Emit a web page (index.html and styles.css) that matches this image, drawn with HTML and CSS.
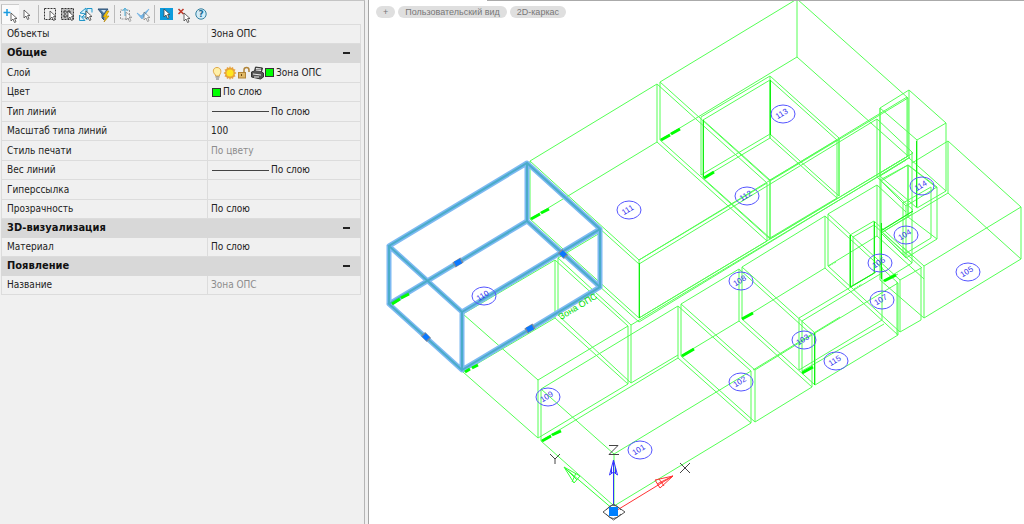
FILE: index.html
```html
<!DOCTYPE html>
<html lang="ru">
<head>
    <meta charset="UTF-8">
    <meta name="viewport" content="width=device-width, initial-scale=1.0">
    <title>Свойства</title>
    <link rel="stylesheet" href="styles.css">
</head>
<body>
    <!-- Properties panel -->
    <aside class="panel">
        <div class="toolbar">
            <button class="tool active" aria-label="Добавить к выбору"><svg viewBox="0 0 18 20"><path d="M5 4v7M1.500 7.500h7" stroke="#1a9be0" stroke-width="1.500"/><use href="#cursor" x="9" y="8"/></svg></button>
            <button class="tool" aria-label="Выбор"><svg viewBox="0 0 18 20"><use href="#cursor" x="5" y="6"/></svg></button>
            <span class="sep"></span>
            <button class="tool" aria-label="Выбор рамкой"><svg viewBox="0 0 18 20"><rect x="3.500" y="4.500" width="11" height="11" class="dash"/><use href="#cursor" x="9" y="7"/></svg></button>
            <button class="tool" aria-label="Выбрать все"><svg viewBox="0 0 18 20"><rect x="2.500" y="4.500" width="12" height="11" fill="#bbb" class="dash"/><path d="M4 8h9M4 12h9M6 6v9M10 6v9" class="dash"/><use href="#cursor" x="9" y="7"/></svg></button>
            <button class="tool" aria-label="Выбрать подобные"><svg viewBox="0 0 18 20"><path d="M2.500 11V16.500H8zM3 9l6-5v6zM10 4.500h5v4M8 10l-3 3h6zM10 4.500V16" fill="#d9f0fa" stroke="#2196c9"/><use href="#cursor" x="9" y="7"/></svg></button>
            <button class="tool" aria-label="Быстрый выбор"><svg viewBox="0 0 18 20"><path d="M3 5h10l-4 5v6l-2-2v-4z" fill="#4d78a0" stroke="#2e5277"/><path d="M6 6h5l-2 3z" fill="#cfe2f3"/><path d="M12 7L8 13h3l-2 5 5-6h-3l3-5z" fill="#fc0" stroke="#a87800" stroke-width=".6"/></svg></button>
            <span class="sep"></span>
            <button class="tool" aria-label="Выбор снаружи"><svg viewBox="0 0 18 20"><rect x="3.500" y="6" width="9" height="9" class="dash pale"/><path d="M8 12V5M5.500 7L8 4l2.500 3" stroke="#4db0dc" fill="none"/><g opacity=".5"><use href="#cursor" x="9" y="8"/></g></svg></button>
            <button class="tool" aria-label="Применить"><svg viewBox="0 0 18 20"><path d="M2 9l4 3 8-7-7 10z" fill="#78b6e5" stroke="#78b6e5"/><g opacity=".6"><use href="#cursor" x="9" y="8"/></g></svg></button>
            <span class="sep"></span>
            <button class="tool" aria-label="Режим выбора"><svg viewBox="0 0 18 20"><rect x="3" y="4" width="13" height="12" fill="#0c9bdc"/><use href="#cursor" x="7" y="5"/></svg></button>
            <button class="tool" aria-label="Снять выбор"><svg viewBox="0 0 18 20"><path d="M3.500 5l5 5M8.500 5l-5 5" stroke="#c0392b" stroke-width="1.600"/><use href="#cursor" x="9" y="9"/></svg></button>
            <button class="tool" aria-label="Справка"><svg viewBox="0 0 18 20"><circle cx="8" cy="10" r="5.200" fill="#d4ecf8" stroke="#34809f"/><text x="8" y="13" class="question">?</text></svg></button>
        </div>

        <table class="props">
            <tbody>
                <tr><th scope="row">Объекты</th><td>Зона ОПС</td></tr>
            </tbody>
            <tbody class="general">
                <tr class="group"><th colspan="2"><span>Общие</span><button aria-label="Свернуть"></button></th></tr>
                <tr><th scope="row">Слой</th><td><div class="value">
                    <svg class="layer-icons" width="53" height="14" viewBox="0 0 53 14">
                        <path d="M4.500 9C1 6 2 1.500 6 1.500S11 6 8.500 9v1h-4z" fill="#fff0a8" stroke="#dfa743"/>
                        <path d="M4.500 11h4M5 13h3" stroke="#777"/>
                        <path d="M19 0l1 2 2-1 .5 2 2 .5-1 2 2 1.500-2 1.500 1 2-2 .5-.5 2-2-1-1 2-1-2-2 1-.5-2-2-.5 1-2-2-1.500 2-1.500-1-2 2-.5.5-2 2 1z" fill="#e6a23c"/>
                        <circle cx="19" cy="7" r="3.500" fill="#ffe51f"/>
                        <rect x="27.500" y="6.500" width="7" height="5.500" fill="#dfb766" stroke="#b18438"/>
                        <path d="M33 7V4q0-2.500 2.500-2.500T38 4v2" fill="none" stroke="#b18438" stroke-width="1.500"/>
                        <path d="M30.500 8v2" stroke="#6b4914"/>
                        <path d="M40.500 6l3-1 1-4 7 1-1 4 2 1v4l-3 2-9-2z" fill="#555" stroke="#333"/>
                        <path d="M45 4l5 .5M45 2.500l5 .5M42 8l8 1M43 11h5" stroke="#eee"/>
                    </svg>
                    <span class="swatch"></span>Зона ОПС</div></td></tr>
                <tr><th scope="row">Цвет</th><td><div class="value"><span class="swatch"></span>По слою</div></td></tr>
                <tr><th scope="row">Тип линий</th><td><div class="value"><span class="line"></span>По слою</div></td></tr>
                <tr><th scope="row">Масштаб типа линий</th><td>100</td></tr>
                <tr><th scope="row">Стиль печати</th><td class="muted">По цвету</td></tr>
                <tr><th scope="row">Вес линий</th><td><div class="value"><span class="line"></span>По слою</div></td></tr>
                <tr><th scope="row">Гиперссылка</th><td></td></tr>
                <tr><th scope="row">Прозрачность</th><td>По слою</td></tr>
            </tbody>
            <tbody>
                <tr class="group"><th colspan="2"><span>3D-визуализация</span><button aria-label="Свернуть"></button></th></tr>
                <tr><th scope="row">Материал</th><td>По слою</td></tr>
            </tbody>
            <tbody>
                <tr class="group"><th colspan="2"><span>Появление</span><button aria-label="Свернуть"></button></th></tr>
                <tr><th scope="row">Название</th><td class="muted">Зона ОПС</td></tr>
            </tbody>
        </table>
    </aside>

    <!-- Drawing -->
    <main class="drawing">
        <svg class="model" viewBox="369 0 655 524" preserveAspectRatio="xMinYMin meet">
            <defs>
                <g id="cursor"><path d="M0 0v8l2-2 1.500 3.500 1.500-.7L3.600 5.500H6z" fill="#fff" stroke="#444" stroke-width=".8"/></g>
            </defs>
            <g id="zones"></g>
            <g class="extra">
                <!-- upper block -->
                <path d="M701 175V117L770 76L839 138V196L770 134L701 175M770 76V134M770 80V138"/>
                <path d="M639 260L907 97V157M639 264L877 119V177M639 318L908 156M639 322L910 157M631 325L906 160"/>
                <path d="M527 163L639 264M527 221L639 322M877 119L913 153M877 177L913 210M880 180L906 206M880 108V280"/>
                <!-- stair and small rooms -->
                <path d="M839 138V196M912 152V263M913 153L880 173M880 180L908 165L937 188M908 165V217"/>
                <path d="M948 141L912 163M948 193L903 220M924 266L903 247M924 318L880 280M922 268L880 230M921 268V320L900 332"/>
                <path d="M880 231L913 211M881 233L912 263M883 281L912 263M881 233L912 214M874 273L850 287"/>
                <path d="M931 187V238L903 255V203L931 187M853 237L874 225L906 254M874 221L912 256M853 237V285"/>
                <path d="M828 214L877 185V236L828 266M828 214V266L900 332V280L828 214M877 185L906 212M877 236L924 279M900 280L921 268"/>
                <path d="M799 318V370L882 320M802 321V371L884 324M799 318L876 272M802 321L882 273M882 267V320M897 282V335"/>
                <path d="M881 223V278M850 235V287M883 281L898 274"/>
                <path class="strong" d="M639.500 263V318M703.500 120V177M770.500 80V135M850.500 235V287L874.500 273V222M881.500 223V279M814.500 333V385M916.500 141V207M881 231L913 211"/>
            </g>
            <g class="selected">
                <path d="M462 370L600 287L527 221L389 304ZM462 312L600 229L527 163L389 246ZM462 370V312M600 287V229M527 221V163M389 304V246" class="glow"/>
                <path d="M462 370L600 287L527 221L389 304ZM462 312L600 229L527 163L389 246ZM462 370V312M600 287V229M527 221V163M389 304V246" class="core"/>
                <path d="M454 265L462 260M526 331L534 326M560 251L566 257M423 334L429 340" class="grip-edge"/>
                <path d="M455 264L461 261M527 330L533 327M561 252L565 256M424 335L428 339" class="grip"/>
            </g>
            <g class="tags">
                <path d="M531 219L540 214M541 213L549 209M661 140L670 135M671 134L680 129M704 178L714 172M392 304L400 299M401 298L409 294M465 372L470 369M472 368L478 365M542 441L551 436M552 435L561 431M682 356L694 349M742 319L753 313M802 373L813 367M884 281L896 275"/>
                <path class="faint" d="M829 266L836 262M854 289L862 284M881 175L888 171"/>
                <text transform="translate(561 320) rotate(-31)">Зона ОПС</text>
            </g>
            <g id="rooms"></g>
            <!-- UCS icon -->
            <g class="ucs">
                <path d="M614 510L566 469M564 467L580 476L574 483ZM564 467L577 480M576 473L572 482" stroke="#3f3"/>
                <path d="M614 512L673 476M673 476L655 480L660 488ZM673 476L657 484M659 479L664 486" stroke="#f33"/>
                <path d="M613.500 506V475" stroke="#3aa0a8"/>
                <path d="M613.500 505V460L609.500 475L613.500 472L617.500 475L613.500 460M611.500 468V473M615.500 468V473" stroke="#33f"/>
                <path d="M603 512L613.500 504L625 512L613.500 520ZM606 510Q613 500 621 510M606 514Q613 523 621 514" stroke="#555"/>
                <rect x="609" y="507" width="9" height="9" fill="#0080ff"/>
                <path d="M609 445.500H618L609 454.500H619M550 454L555 459L560 454M555 459V464M680 463L690 473M690 463L680 473" stroke="#444"/>
            </g>
        </svg>
        <div class="view-controls">
            <button>+</button>
            <button>Пользовательский вид</button>
            <button>2D-каркас</button>
        </div>
    </main>

    <script src="script.js"></script>
</body>
</html>
```
FILE: styles.css
```css
* { box-sizing: border-box; }
body { margin: 0; height: 100vh; display: flex; overflow: hidden; background: #f0f0f0; color: #222; font-family: "DejaVu Sans Condensed", "DejaVu Sans", sans-serif; font-size: 10px; }
button { border: 0; padding: 0; background: none; font: inherit; color: inherit; }

.panel { flex: 0 0 365px; padding: 2px 3px 0 1px; border-top: 1px solid #c4c4c4; border-right: 1px solid #b5b5b5; }
.toolbar { display: flex; align-items: center; height: 21px; }
.tool { width: 18px; height: 20px; }
.tool svg { display: block; width: 18px; height: 20px; fill: none; }
.tool.active { background: #fafafa; border-left: 1px solid #bbb; border-top: 1px solid #ccc; }
.sep { width: 1px; height: 18px; margin: 0 2px 0 1px; background: #bbb; }
.dash { stroke: #333; stroke-dasharray: 2 1; }
.pale { stroke: #999; }
.question { font: bold 9px "DejaVu Sans", sans-serif; fill: #1d6e94; text-anchor: middle; }

.props { width: 100%; border-collapse: collapse; table-layout: fixed; }
.props tr { height: 19px; }
.general tr:nth-child(even) { height: 20px; }
.props th, .props td { padding: 0 0 0 3px; border: 1px solid #dcdcdc; text-align: left; font-weight: normal; line-height: 16px; white-space: nowrap; }
.props th { width: 206px; padding-left: 5px; }
.props td.muted { color: #8c8c8c; }
.props .group th { background: #d8d8d8; border-color: #d8d8d8; color: #111; font-size: 11px; font-weight: bold; }
.group button { float: right; width: 7px; height: 2px; margin: 7px 10px 0 0; background: #222; }
.value { display: flex; align-items: center; height: 16px; }
.swatch { width: 9px; height: 9px; margin: 0 2px 0 1px; border: 1px solid #333; background: #0f0; }
.line { width: 57px; height: 1px; margin: 0 2px 0 1px; background: #444; }

.drawing { flex: 1; position: relative; margin-left: 3px; min-width: 0; background: #fff; border-left: 1px solid #a5a5a5; }
.drawing::before { content: ""; position: absolute; top: 0; left: 118px; right: 0; height: 1px; background: #aaa; }
.model { display: block; width: 100%; height: 100%; fill: none; }
.view-controls { position: absolute; top: 6px; left: 7px; display: flex; gap: 3px; }
.view-controls button { height: 12px; padding: 0 7px; border-radius: 6px; background: #dfdfdf; color: #777; font: 9px/12px "Liberation Sans", sans-serif; }

#zones path, .extra path { stroke: #5f5; stroke-width: 1; }
.extra .strong { stroke: #1e1; }
.tags path { stroke: #0f0; stroke-width: 3; }
.tags .faint { stroke: #5f5; stroke-width: 1; stroke-dasharray: 2 1; }
.tags text { fill: #0d0; font: 9px "Liberation Sans", sans-serif; }
.glow { stroke: #7db9f2; stroke-width: 5; stroke-linejoin: round; }
.core { stroke: #4aacc9; stroke-width: 2; }
.grip-edge { stroke: #7c8a9c; stroke-width: 6; }
.grip { stroke: #0a78ff; stroke-width: 5; }
#rooms ellipse { stroke: #55f; }
#rooms text { fill: #33e; font: 8px "Liberation Sans", sans-serif; text-anchor: middle; }
.ucs path { stroke-width: 1; }
```
FILE: script.js
```js
const NS = 'http://www.w3.org/2000/svg';

// floor corners (front, right, back, left) and height of each zone
const zones = [
    [[639, 318], [767, 241], [657, 142], [530, 219], 58],
    [[770, 239], [908, 156], [797, 57], [660, 140], 58],
    [[770, 238], [837, 198], [770, 138], [703, 178], 58],
    [[538, 438], [628, 384], [555, 318], [463, 372], 58],
    [[614, 506], [751, 423], [678, 358], [541, 441], 52],
    [[755, 422], [812, 387], [739, 321], [681, 356], 52],
    [[815, 385], [898, 335], [825, 268], [742, 319], 52],
    [[917, 208], [946, 191], [909, 158], [880, 176], 68],
    [[906, 258], [937, 239], [908, 217], [881, 233], 52]
];

// open parts of the zones that share a wall
const walls = [
    [[558, 258], [631, 325], [631, 383], [558, 315], [558, 258], [600, 233]],
    [[631, 383], [678, 355]],
    [[753, 370], [840, 317]],
    [[948, 141], [1021, 207], [1021, 259], [924, 318], [924, 266], [1021, 207]],
    [[1021, 259], [948, 193], [948, 141]],
    [[850, 287], [850, 235], [874, 221], [874, 273]]
];

const rooms = [
    [110, 484, 296], [111, 629, 210], [113, 783, 114], [112, 747, 196], [114, 922, 186],
    [104, 906, 235], [106, 880, 263], [105, 968, 272], [107, 882, 300], [108, 741, 281],
    [103, 804, 340], [115, 836, 361], [102, 741, 382], [109, 548, 397], [101, 640, 450]
];

function add(parent, name, attrs) {
    const el = document.createElementNS(NS, name);
    for (const key in attrs) el.setAttribute(key, attrs[key]);
    parent.appendChild(el);
    return el;
}

const zoneLayer = document.getElementById('zones');
zones.forEach((zone) => {
    const h = zone[4];
    const floor = zone.slice(0, 4);
    const roof = floor.map(([x, y]) => [x, y - h]);
    const posts = floor.map(([x, y]) => `M${x} ${y}V${y - h}`).join('');
    add(zoneLayer, 'path', { d: `M${floor.join('L')}ZM${roof.join('L')}Z${posts}` });
});
walls.forEach((wall) => add(zoneLayer, 'path', { d: 'M' + wall.join('L') }));

const roomLayer = document.getElementById('rooms');
rooms.forEach(([number, x, y]) => {
    add(roomLayer, 'ellipse', { cx: x, cy: y, rx: 12, ry: 9 });
    const label = add(roomLayer, 'text', { transform: `translate(${x} ${y + 2}) rotate(-31)` });
    label.textContent = number;
});
```
